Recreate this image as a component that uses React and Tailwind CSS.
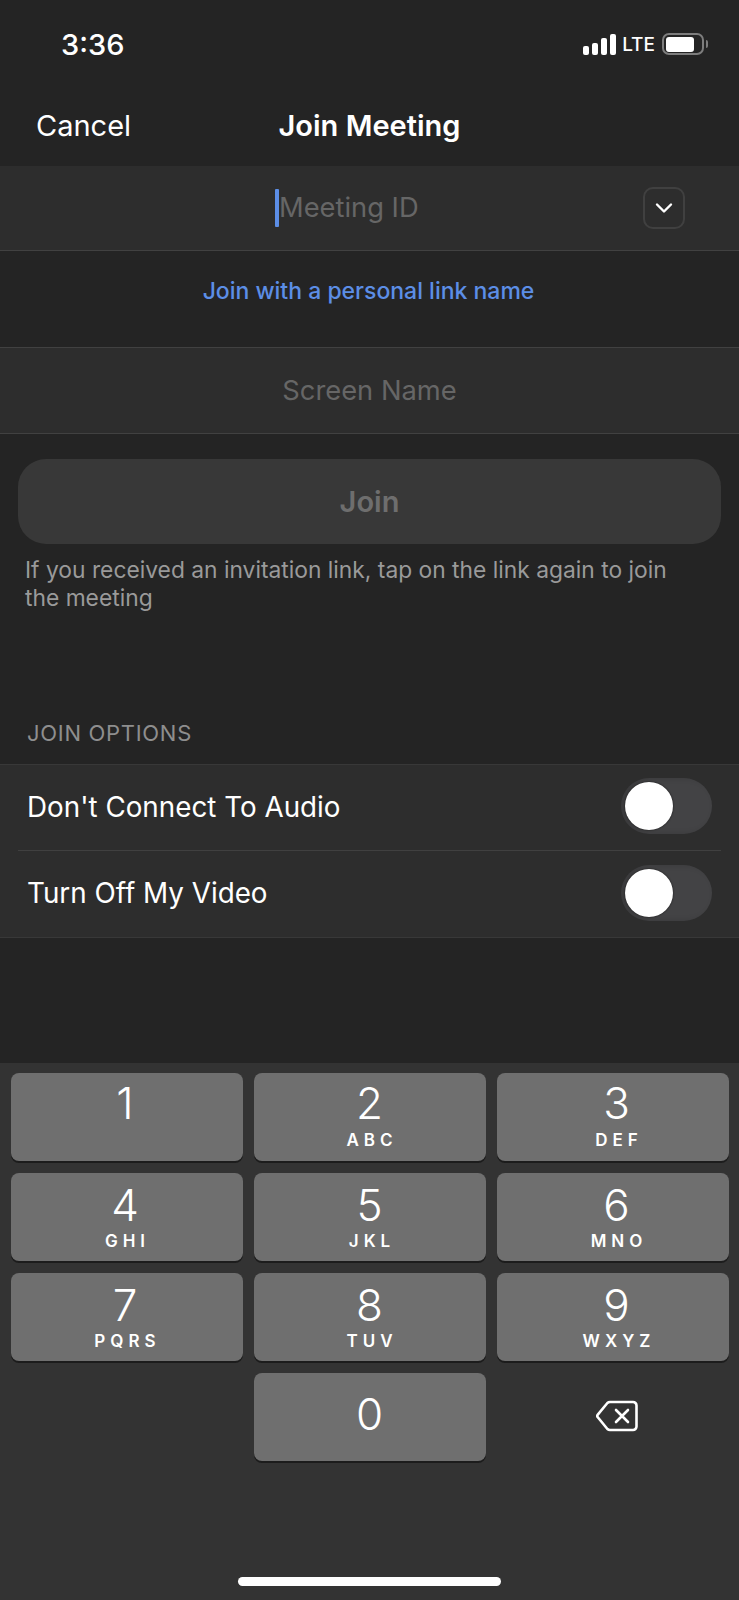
import React from "react";

const keys = [
  { digit: "1", letters: "", col: "pr-[3px]", first: true },
  { digit: "2", letters: "ABC", first: true },
  { digit: "3", letters: "DEF", col: "pl-[8px]", first: true },
  { digit: "4", letters: "GHI", col: "pr-[3px]" },
  { digit: "5", letters: "JKL" },
  { digit: "6", letters: "MNO", col: "pl-[8px]" },
  { digit: "7", letters: "PQRS", col: "pr-[3px]" },
  { digit: "8", letters: "TUV" },
  { digit: "9", letters: "WXYZ", col: "pl-[8px]" },
];

function Key({ digit, letters, col, first }) {
  return (
    <div className={`h-[88px] rounded-[8px] bg-[#6f6f6f] shadow-[0_2px_0_#1c1c1c] flex flex-col items-center text-white ${col || ""}`}>
      <div className={digit === "0" ? "mt-[16px] text-[44px] leading-[50px] font-light" : first ? "mt-[5px] text-[44px] leading-[50px] font-light" : "mt-[7px] text-[44px] leading-[50px] font-light"}>{digit}</div>
      {letters && <div className={first ? "mt-[2px] pl-[5px] text-[17px] leading-[20px] font-semibold tracking-[5px]" : "mt-[1px] pl-[5px] text-[17px] leading-[20px] font-semibold tracking-[5px]"}>{letters}</div>}
    </div>
  );
}

function Toggle({ className }) {
  return (
    <div className={`w-[91px] h-[56px] rounded-full bg-[#434345] flex items-center pl-[4px] shadow-[inset_4px_0_6px_rgba(0,0,0,0.15)] ${className}`}>
      <div className="w-[48px] h-[48px] rounded-full bg-white shadow-[0_0_2px_rgba(0,0,0,0.8)]" />
    </div>
  );
}

function SignalBars() {
  return (
    <div className="flex items-end gap-[2.5px]">
      <div className="w-[6.5px] h-[9px] rounded-[2px] bg-white" />
      <div className="w-[6.5px] h-[12px] rounded-[2px] bg-white" />
      <div className="w-[6.5px] h-[17px] rounded-[2px] bg-white" />
      <div className="w-[6.5px] h-[21px] rounded-[2px] bg-white" />
    </div>
  );
}

function Battery() {
  return (
    <div className="flex items-center gap-[2px]">
      <div className="w-[42px] h-[22px] rounded-[7px] border-2 border-[#7d7d7d] p-[1.5px] pr-[8px]">
        <div className="h-full rounded-[3px] bg-white" />
      </div>
      <div className="w-[2px] h-[8px] rounded-r-full bg-[#7d7d7d]" />
    </div>
  );
}

export default function App() {
  return (
    <div className="w-[739px] h-[1600px] bg-[#242424] flex flex-col overflow-hidden font-['Inter',sans-serif] text-white">
      {/* status bar */}
      <div className="h-[88px] flex items-center justify-between pl-[61px] pr-[31px]">
        <span className="text-[29px] font-medium leading-none">3:36</span>
        <div className="flex items-center">
          <SignalBars />
          <span className="ml-[6px] mr-[7px] text-[19px] font-medium leading-none">LTE</span>
          <Battery />
        </div>
      </div>

      {/* nav */}
      <div className="h-[78px] relative flex items-center justify-center pb-[4px]">
        <span className="absolute left-[36px] text-[29px] leading-none">Cancel</span>
        <span className="text-[29px] font-semibold leading-none">Join Meeting</span>
      </div>

      {/* meeting id */}
      <div className="h-[85px] bg-[#2d2d2d] border-b border-[#414141] flex items-center pl-[275px] pr-[54px]">
        <div className="w-[4px] h-[38px] rounded-[1px] bg-[#5c8ee6]" />
        <span className="text-[27.3px] leading-none text-[#666666]">Meeting ID</span>
        <div className="ml-auto w-[42px] h-[42px] rounded-[10px] border-2 border-[#404040] flex items-center justify-center">
          <svg width="18" height="12" viewBox="0 0 18 12" fill="none" stroke="white" strokeWidth="2.4" strokeLinecap="round" strokeLinejoin="round">
            <path d="M2 2.5l7 7 7-7" />
          </svg>
        </div>
      </div>

      <div className="h-[96px] flex items-center justify-center pb-[16px] pr-[2px] text-[23px] font-medium text-[#5c8ee6]">Join with a personal link name</div>

      {/* screen name */}
      <div className="h-[87px] pt-[2px] bg-[#2d2d2d] border-y border-[#414141] flex items-center justify-center text-[27.3px] text-[#666666]">Screen Name</div>

      {/* join */}
      <div className="mt-[25px] mx-[18px] h-[85px] rounded-[28px] bg-[#383838] flex items-center justify-center text-[29px] font-semibold text-[#6e6e6e]">Join</div>
      <p className="mt-[12px] ml-[25px] mr-[60px] text-[22.8px] leading-[28px] text-[#9a9a9a]">If you received an invitation link, tap on the link again to join the meeting</p>

      <div className="mt-[108px] ml-[27px] text-[22px] leading-[26px] tracking-[0.7px] text-[#8e8e8e]">JOIN OPTIONS</div>

      {/* options */}
      <div className="mt-[18px] bg-[#2d2d2d] border-y border-[#383838]">
        <div className="h-[85px] flex items-center justify-between px-[27px] text-[27.8px]">
          <span>Don't Connect To Audio</span>
          <Toggle className="mb-[4px]" />
        </div>
        <div className="mx-[18px] border-t border-[#404040]" />
        <div className="h-[86px] flex items-center justify-between px-[27px] text-[27.8px]">
          <span>Turn Off My Video</span>
          <Toggle className="mb-[2px]" />
        </div>
      </div>

      {/* keypad */}
      <div className="mt-[125px] flex-1 bg-[#333333] px-[10.5px] pt-[10px] flex flex-col">
        <div className="grid grid-cols-3 gap-x-[11px] gap-y-[12px]">
          {keys.map((k) => (
            <Key key={k.digit} digit={k.digit} letters={k.letters} col={k.col} first={k.first} />
          ))}
          <div />
          <Key digit="0" letters="" />
          <div className="flex items-center justify-center pl-[9px] pb-[3px]">
            <svg width="42" height="32" viewBox="0 0 42 32" fill="none" stroke="white" strokeWidth="2.6" strokeLinecap="round" strokeLinejoin="round">
              <path d="M14 2h23a3.5 3.5 0 0 1 3.5 3.5v21a3.5 3.5 0 0 1-3.5 3.5H14a4 4 0 0 1-2.6-1L1.8 17.3a2 2 0 0 1 0-2.6L11.4 3a4 4 0 0 1 2.6-1z" />
              <path d="M20 10l12 12M32 10L20 22" />
            </svg>
          </div>
        </div>
        <div className="mt-auto mb-[14px] mx-auto w-[263px] h-[9px] rounded-full bg-white" />
      </div>
    </div>
  );
}
